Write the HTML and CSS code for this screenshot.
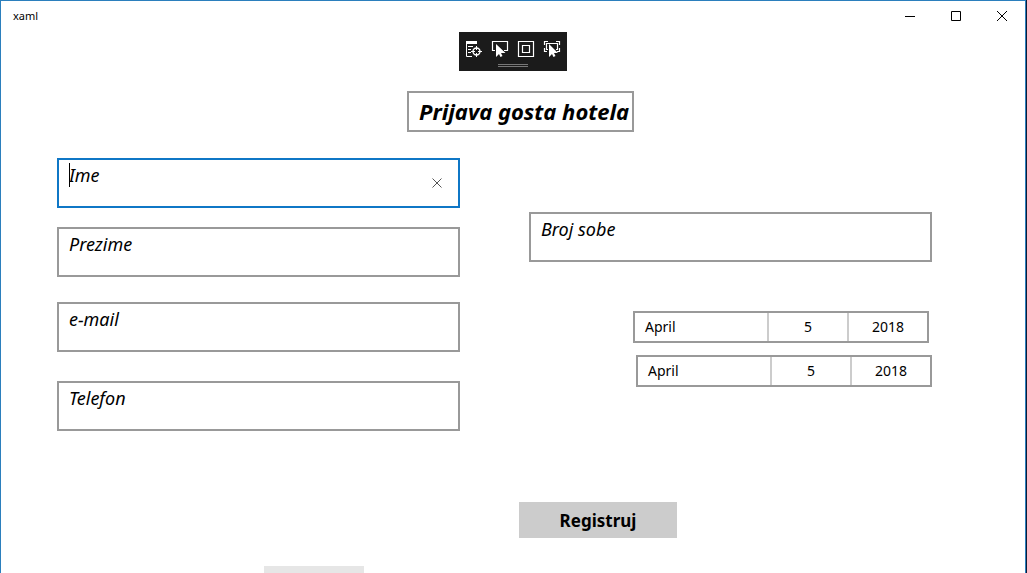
FILE: index.html
```html
<!DOCTYPE html>
<html lang="hr">
<head>
<meta charset="utf-8">
<title>xaml</title>
<meta name="viewport" content="width=device-width, initial-scale=1">
<link rel="stylesheet" href="styles.css">
</head>
<body>
<div class="window">
  <header class="titlebar">
    <span class="app-name">xaml</span>
    <div class="window-controls">
      <button type="button" aria-label="Minimize"><svg width="10" height="10" viewBox="0 0 10 10"><path d="M0 5.5h10"/></svg></button>
      <button type="button" aria-label="Maximize"><svg width="10" height="10" viewBox="0 0 10 10"><path d="M.5.5h9v9h-9z"/></svg></button>
      <button type="button" aria-label="Close"><svg width="10" height="10" viewBox="0 0 10 10"><path d="M0 0l10 10M10 0L0 10"/></svg></button>
    </div>
  </header>

  <div class="debug-bar">
    <div class="debug-tools">
      <button type="button" aria-label="Go to live visual tree">
        <svg width="18" height="18" viewBox="0 0 18 18"><path class="solid" d="M1 1h11v3H1z"/><path d="M1.500 3v13.500H7M3 6.500h5M3 9.500h3M3 12.500h3M11.500 6v4M11.500 13v4M6 11.500h4M13 11.500h4"/><circle cx="11.500" cy="11.500" r="3.500" stroke-width="1.400"/></svg>
      </button>
      <button type="button" aria-label="Enable selection">
        <svg width="18" height="18" viewBox="0 0 18 18"><path d="M4 10.500H1.500v-9h15v9H13" stroke-width="1.200"/><path class="solid" d="M5 4v13l3-3 1.500 3 2-1-1.500-3h4.500z"/></svg>
      </button>
      <button type="button" aria-label="Display layout adorners">
        <svg width="18" height="18" viewBox="0 0 18 18"><path d="M1.500 1.500h15v15h-15zM5.500 5.500h7v7h-7z" stroke-width="1.200"/></svg>
      </button>
      <button type="button" aria-label="Track focused element">
        <svg width="18" height="18" viewBox="0 0 18 18"><path d="M1.500 5V1.500H5M13 1.500h3.500V5M1.500 8v3.500H4M14 11.500h2.500V8M5 9.500H3.500v-6h11v6H13" stroke-width="1.200"/><path class="solid" d="M6 4v13l3-3 1.500 3 2-1-1.500-3h4z"/></svg>
      </button>
    </div>
    <div class="grip"></div>
  </div>

  <main>
    <form class="form">
      <input class="box heading" type="text" aria-label="Naslov" value="Prijava gosta hotela">
      <div class="columns">
        <div class="guest">
          <div class="field active">
            <input class="box text" type="text" aria-label="Ime" value="Ime">
            <span class="caret"></span>
            <button class="clear" type="button" aria-label="Clear"><svg width="10" height="10" viewBox="0 0 10 10"><path d="M.5.5l9 9M9.500.5l-9 9"/></svg></button>
          </div>
          <input class="box text" type="text" aria-label="Prezime" value="Prezime">
          <input class="box text email" type="text" aria-label="e-mail" value="e-mail">
          <input class="box text phone" type="text" aria-label="Telefon" value="Telefon">
        </div>
        <div class="stay">
          <input class="box text" type="text" aria-label="Broj sobe" value="Broj sobe">
          <button class="date arrival" type="button"><span>April</span><span>5</span><span>2018</span></button>
          <button class="date" type="button"><span>April</span><span>5</span><span>2018</span></button>
        </div>
      </div>
      <button class="submit" type="submit">Registruj</button>
      <div class="next-panel"></div>
    </form>
  </main>
</div>
</body>
</html>
```
FILE: styles.css
```css
* {
  box-sizing: border-box;
}

body {
  margin: 0;
  padding-right: 1px;
  background: #0b1b38;
  color: #000;
  font-family: "Noto Sans", "Open Sans", sans-serif;
  font-size: 15px;
}

button,
input {
  font: inherit;
  color: inherit;
  margin: 0;
}

button {
  padding: 0;
  border: 0;
  background: none;
}

svg {
  display: block;
  fill: none;
  stroke: currentColor;
}

.solid {
  fill: currentColor;
  stroke: none;
}

.window {
  height: 100vh;
  overflow: hidden;
  border: 1px solid #2b7fbd;
  border-bottom: 0;
  background: #fff;
}

.titlebar {
  display: flex;
  justify-content: space-between;
  height: 31px;
  padding-left: 12px;
}

.app-name {
  font-size: 11px;
  line-height: 30px;
}

.window-controls {
  display: flex;
}

.window-controls button {
  display: grid;
  place-items: center;
  width: 46px;
  height: 30px;
}

.debug-bar {
  width: 108px;
  height: 39px;
  margin: 0 auto;
  padding: 8px 6px 0;
  background: #1b1b1b;
  color: #fff;
}

.debug-tools {
  display: flex;
  gap: 8px;
}

.grip {
  width: 30px;
  height: 3px;
  margin: 6px auto 0;
  border: solid #777;
  border-width: 1px 0;
}

.form {
  display: flex;
  flex-direction: column;
  padding: 20px 93px 0 56px;
}

.box {
  display: block;
  width: 100%;
  height: 50px;
  padding: 0 10px 16px;
  border: 2px solid #999;
  border-radius: 0;
  outline: 0;
  background: #fff;
  font-size: 18px;
  font-style: italic;
}

.heading {
  align-self: center;
  width: 227px;
  height: 41px;
  margin-left: 52px;
  padding: 0 0 2px 10px;
  font-size: 22px;
  font-weight: 700;
}

.columns {
  display: grid;
  grid-template-columns: 1fr 1fr;
  gap: 69px;
  margin-top: 26px;
}

.field {
  position: relative;
  margin-bottom: 19px;
}

.active .box {
  border-color: #0f77c6;
}

.caret {
  position: absolute;
  top: 5px;
  left: 12px;
  width: 1px;
  height: 24px;
  background: #000;
}

.clear {
  position: absolute;
  top: 20px;
  right: 18px;
  color: #555;
}

.email {
  margin-top: 25px;
}

.phone {
  margin-top: 29px;
}

.stay {
  display: flex;
  flex-direction: column;
  align-items: flex-end;
  padding-top: 54px;
}

.date {
  display: grid;
  grid-template-columns: 132px 80px 80px;
  width: 296px;
  height: 32px;
  border: 2px solid #999;
  font-size: 14px;
  line-height: 28px;
}

.date span + span {
  border-left: 2px solid #ccc;
}

.date span:first-child {
  padding-left: 10px;
  text-align: left;
}

.arrival {
  margin: 49px 3px 12px 0;
}

.submit {
  width: 158px;
  height: 36px;
  margin: 71px 0 28px 462px;
  background: #ccc;
  font-size: 17px;
  font-weight: 700;
}

.next-panel {
  width: 100px;
  height: 32px;
  margin-left: 207px;
  background: #e6e6e6;
}
```
